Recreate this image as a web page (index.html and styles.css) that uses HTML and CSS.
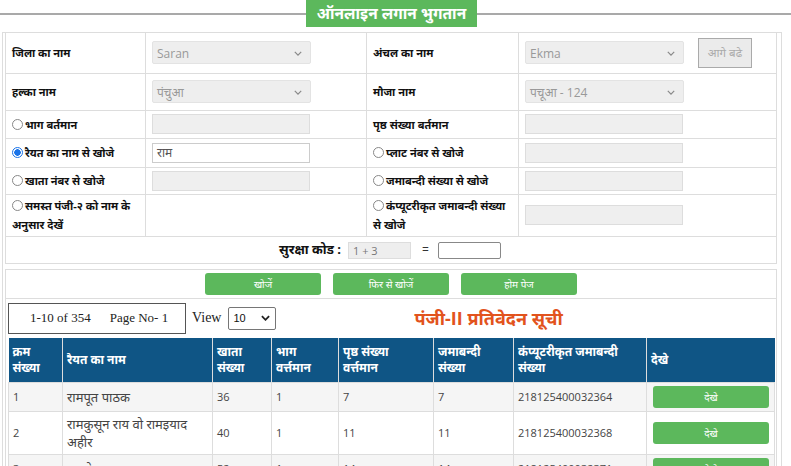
FILE: index.html
```html
<!DOCTYPE html>
<html lang="hi">
<head>
<meta charset="utf-8">
<title>ऑनलाइन लगान भुगतान</title>
<link rel="stylesheet" href="styles.css">
</head>
<body>
<div class="title-bar"><span class="title">ऑनलाइन लगान भुगतान</span></div>
<div class="panel">
  <table class="form">
    <colgroup><col class="c1"><col class="c2"><col class="c3"><col class="c4"></colgroup>
    <tr class="r1">
      <th>जिला का नाम</th>
      <td><div class="sel">Saran<svg class="chev" viewBox="0 0 10 6" width="8" height="5"><path d="M1 1l4 4 4-4" fill="none" stroke="#888" stroke-width="1.5"/></svg></div></td>
      <th>अंचल का नाम</th>
      <td><div class="with-btn"><div class="sel">Ekma<svg class="chev" viewBox="0 0 10 6" width="8" height="5"><path d="M1 1l4 4 4-4" fill="none" stroke="#888" stroke-width="1.5"/></svg></div><button class="next">आगे बढे</button></div></td>
    </tr>
    <tr class="r2">
      <th>हल्का नाम</th>
      <td><div class="sel">पंचुआ<svg class="chev" viewBox="0 0 10 6" width="8" height="5"><path d="M1 1l4 4 4-4" fill="none" stroke="#888" stroke-width="1.5"/></svg></div></td>
      <th>मौजा नाम</th>
      <td><div class="sel">पचूआ - 124<svg class="chev" viewBox="0 0 10 6" width="8" height="5"><path d="M1 1l4 4 4-4" fill="none" stroke="#888" stroke-width="1.5"/></svg></div></td>
    </tr>
    <tr class="r3">
      <th><span class="radio"></span>भाग बर्तमान</th>
      <td><div class="inp dis"></div></td>
      <th>पृष्ठ संख्या बर्तमान</th>
      <td><div class="inp dis"></div></td>
    </tr>
    <tr class="r4">
      <th><span class="radio on"></span>रैयत का नाम से खोजे</th>
      <td><div class="inp">राम</div></td>
      <th><span class="radio"></span>प्लाट नंबर से खोजे</th>
      <td><div class="inp dis"></div></td>
    </tr>
    <tr class="r5">
      <th><span class="radio"></span>खाता नंबर से खोजे</th>
      <td><div class="inp dis"></div></td>
      <th><span class="radio"></span>जमाबन्दी संख्या से खोजे</th>
      <td><div class="inp dis"></div></td>
    </tr>
    <tr class="r6">
      <th><span class="radio"></span>समस्त पंजी-२ को नाम के अनुसार देखें</th>
      <td></td>
      <th><span class="radio"></span>कंप्यूटरीकृत जमाबन्दी संख्या से खोजे</th>
      <td><div class="inp dis"></div></td>
    </tr>
    <tr class="r7">
      <td colspan="4" class="captcha">
        <b>सुरक्षा कोड :</b><span class="cap-box">1 + 3</span><span class="eq">=</span><span class="cap-ans"></span>
      </td>
    </tr>
  </table>
  <div class="results">
    <div class="actions">
      <button class="btn">खोजें</button>
      <button class="btn">फिर से खोजें</button>
      <button class="btn">होम पेज</button>
    </div>
    <div class="pager">
      <div class="pager-box"><span>1-10 of 354</span><span>Page No- 1</span></div>
      <span class="view">View</span>
      <div class="view-sel">10<svg viewBox="0 0 10 6" width="9" height="6"><path d="M1 1l4 4 4-4" fill="none" stroke="#222" stroke-width="2"/></svg></div>
      <h2 class="report-title">पंजी-II प्रतिवेदन सूची</h2>
    </div>
    <table class="data">
      <colgroup><col class="d1"><col class="d2"><col class="d3"><col class="d4"><col class="d5"><col class="d6"><col class="d7"><col class="d8"></colgroup>
      <thead>
        <tr>
          <th>क्रम संख्या</th>
          <th>रैयत का नाम</th>
          <th>खाता संख्या</th>
          <th>भाग वर्त्तमान</th>
          <th>पृष्ठ संख्या वर्त्तमान</th>
          <th>जमाबन्दी संख्या</th>
          <th>कंप्यूटरीकृत जमाबन्दी संख्या</th>
          <th>देखे</th>
        </tr>
      </thead>
      <tbody>
        <tr class="odd">
          <td class="num">1</td><td class="name">रामपूत पाठक</td><td class="num">36</td><td class="num">1</td><td class="num">7</td><td class="num">7</td><td class="num">218125400032364</td><td><button class="btn see">देखे</button></td>
        </tr>
        <tr>
          <td class="num">2</td><td class="name">रामकुसून राय वो रामइयाद अहीर</td><td class="num">40</td><td class="num">1</td><td class="num">11</td><td class="num">11</td><td class="num">218125400032368</td><td><button class="btn see">देखे</button></td>
        </tr>
        <tr class="odd">
          <td class="num">3</td><td class="name">रामसेवक साह</td><td class="num">52</td><td class="num">1</td><td class="num">14</td><td class="num">14</td><td class="num">218125400032371</td><td><button class="btn see">देखे</button></td>
        </tr>
      </tbody>
    </table>
  </div>
</div>
</body>
</html>
```
FILE: styles.css
```css
* { box-sizing: border-box; }
body {
  margin: 0;
  font-family: "Open Sans", "Noto Sans", "Noto Sans Devanagari", sans-serif;
  font-size: 12px;
  color: #333;
  background: #fff;
}
.title-bar {
  display: flex;
  align-items: center;
  height: 27px;
}
.title-bar::before,
.title-bar::after {
  content: "";
  border-top: 2px solid #a9a9a9;
}
.title-bar::before { flex: 0 0 306px; }
.title-bar::after { flex: 1; }
.title {
  width: 171px;
  height: 27px;
  line-height: 27px;
  text-align: center;
  background: #5cb85c;
  color: #fff;
  font-weight: bold;
  font-size: 15.5px;
}
.panel {
  margin: 5px 9px 0 2px;
  border: 1px solid #ddd;
  border-bottom: none;
  padding: 0 4px 0 2px;
}
.form {
  width: 100%;
  border-collapse: collapse;
  table-layout: fixed;
}
.form col.c1 { width: 140px; }
.form col.c2 { width: 221px; }
.form col.c3 { width: 152px; }
.form th, .form td {
  border: 1px solid #ddd;
  padding: 0 2px 0 6px;
  text-align: left;
  vertical-align: middle;
  color: #111;
}
.form th { font-weight: bold; font-size: 11px; line-height: 19px; }
.form tr:first-child th, .form tr:first-child td { border-top: none; }
.r1 { height: 40px; }
.r2 { height: 37px; }
.r3 { height: 28px; }
.r4 { height: 29px; }
.r5 { height: 27px; }
.r6 { height: 42px; }
.r7 { height: 27px; }
.sel {
  position: relative;
  width: 159px;
  height: 23px;
  line-height: 23px;
  background: #eee;
  border: 1px solid #e3e3e3;
  border-radius: 2px;
  padding-left: 4px;
  color: #999;
  font-weight: normal;
}
.chev { position: absolute; right: 8px; top: 9px; }
.with-btn { display: flex; align-items: center; gap: 14px; }
.next {
  width: 54px;
  height: 30px;
  background: #ebebeb;
  border: 1px solid #aaa;
  color: #aaa;
  font: inherit;
  font-size: 11.5px;
  padding: 0;
}
.inp {
  width: 158px;
  height: 20px;
  line-height: 18px;
  border: 1px solid #ccc;
  padding-left: 4px;
  color: #555;
  background: #fff;
}
.inp.dis { background: #efefef; border-color: #ddd; }
.radio {
  display: inline-block;
  width: 11px;
  height: 11px;
  border: 1px solid #888;
  border-radius: 50%;
  margin-right: 2px;
  vertical-align: -1px;
  background: #fff;
}
.radio.on {
  border-color: #1a73e8;
  background: radial-gradient(circle, #1a73e8 0 3px, #fff 3.5px);
}
.captcha {
  text-align: center !important;
  padding-right: 8px !important;
}
.captcha b { font-size: 13px; margin-right: 7px; }
.cap-box {
  display: inline-block;
  width: 63px;
  height: 17px;
  line-height: 15px;
  border: 1px solid #ddd;
  background: #eee;
  text-align: left;
  padding-left: 4px;
  font-size: 11px;
  color: #777;
  vertical-align: middle;
}
.eq { margin: 0 9px 0 11px; color: #333; }
.cap-ans {
  display: inline-block;
  width: 63px;
  height: 17px;
  border: 1px solid #888;
  border-radius: 2px;
  vertical-align: middle;
}
.results {
  margin-top: 5px;
  border: 1px solid #ddd;
  border-bottom: none;
  padding: 0 2px;
}
.actions {
  display: flex;
  justify-content: center;
  gap: 12px;
  height: 29px;
  align-items: center;
  border-bottom: 1px solid #ddd;
  margin: 0 -2px;
}
.btn {
  width: 116px;
  height: 22px;
  background: #5cb85c;
  border: none;
  border-radius: 3px;
  color: #fff;
  font: inherit;
  font-size: 10px;
  padding: 0;
}
.pager {
  display: flex;
  align-items: center;
  height: 39px;
}
.pager-box {
  width: 178px;
  height: 31px;
  border: 1px solid #555;
  display: flex;
  align-items: center;
  padding-left: 21px;
  gap: 19px;
  font-family: "Liberation Serif", serif;
  font-size: 13px;
  color: #222;
}
.view {
  font-family: "Liberation Serif", serif;
  font-size: 14px;
  margin-left: 6px;
  color: #222;
}
.view-sel {
  display: flex;
  align-items: center;
  justify-content: space-between;
  width: 48px;
  height: 23px;
  margin-left: 7px;
  border: 1px solid #767676;
  border-radius: 2px;
  padding: 0 5px 0 4px;
  font-size: 11px;
  color: #111;
  font-family: "Liberation Sans", sans-serif;
}
.report-title {
  margin: 0 0 0 138px;
  font-size: 18px;
  font-weight: bold;
  color: #e2531c;
}
.data {
  width: 766px;
  border-collapse: collapse;
  table-layout: fixed;
}
.data col.d1 { width: 54px; }
.data col.d2 { width: 150px; }
.data col.d3 { width: 59px; }
.data col.d4 { width: 67px; }
.data col.d5 { width: 95px; }
.data col.d6 { width: 80px; }
.data col.d7 { width: 133px; }
.data col.d8 { width: 128px; }
.data th {
  background: #0f5585;
  color: #fff;
  font-weight: bold;
  text-align: left;
  vertical-align: middle;
  line-height: 16px;
  padding: 6px 14px 5px 4px;
  border-left: 1px solid #ddd;
  height: 45px;
}
.data th:first-child { border-left: none; }
.data td {
  border: 1px solid #ddd;
  padding: 3px 4px;
  line-height: 18px;
  vertical-align: middle;
  color: #444;
  height: 29px;
}
.data td.num { font-size: 11px; }
.data td.name { font-size: 13px; }
.data tr.odd td { background: #f5f5f5; }
.data td:last-child { padding: 3px 6px; }
.see { font-size: 10px; }
```
